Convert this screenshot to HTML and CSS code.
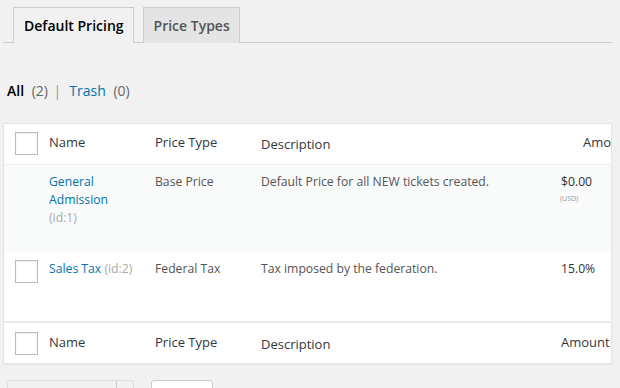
FILE: index.html
```html
<!DOCTYPE html>
<html lang="en">
<head>
    <meta charset="UTF-8">
    <title>Pricing</title>
    <link rel="stylesheet" href="styles.css">
</head>
<body>
    <div class="wrap">
        <nav class="tabs">
            <a href="#" class="tab tab-active">Default Pricing</a>
            <a href="#" class="tab">Price Types</a>
        </nav>

        <ul class="subsubsub">
            <li><a href="#" class="current">All</a> <span class="count">(2)</span> <span class="sep">|</span></li>
            <li><a href="#">Trash</a> <span class="count">(0)</span></li>
        </ul>

        <div class="list-box">
            <table class="list-table">
                <colgroup>
                    <col class="col-cb">
                    <col class="col-name">
                    <col class="col-type">
                    <col class="col-desc">
                    <col class="col-amount">
                </colgroup>
                <thead>
                    <tr>
                        <th class="cb"><span class="checkbox"></span></th>
                        <th>Name</th>
                        <th>Price Type</th>
                        <th class="th-desc">Description</th>
                        <th class="th-amount">Amount</th>
                    </tr>
                </thead>
                <tbody>
                    <tr class="alt row-tall">
                        <td class="cb"></td>
                        <td><a href="#">General Admission</a><br><span class="id">(id:1)</span></td>
                        <td>Base Price</td>
                        <td>Default Price for all NEW tickets created.</td>
                        <td class="amount">$0.00<span class="currency">(USD)</span></td>
                    </tr>
                    <tr class="row-short">
                        <td class="cb"><span class="checkbox"></span></td>
                        <td><a href="#">Sales Tax</a> <span class="id">(id:2)</span></td>
                        <td>Federal Tax</td>
                        <td>Tax imposed by the federation.</td>
                        <td class="amount">15.0%</td>
                    </tr>
                </tbody>
                <tfoot>
                    <tr>
                        <th class="cb"><span class="checkbox"></span></th>
                        <th>Name</th>
                        <th>Price Type</th>
                        <th class="th-desc">Description</th>
                        <th>Amount</th>
                    </tr>
                </tfoot>
            </table>
        </div>

        <div class="tablenav">
            <div class="bulk-select"><span class="bulk-arrow"></span></div>
            <div class="apply-btn"></div>
        </div>
    </div>
</body>
</html>
```

FILE: styles.css
```css
body {
    margin: 0;
    background: #f1f1f1;
    font-family: "Open Sans", "Liberation Sans", sans-serif;
    color: #444;
    overflow: hidden;
}

a {
    color: #0073aa;
    text-decoration: none;
}

.wrap {
    padding: 7px 8px 0 3px;
}

/* tabs */
.tabs {
    display: flex;
    gap: 9px;
    padding-left: 10px;
    border-bottom: 1px solid #ccc;
    height: 35px;
}

.tab {
    box-sizing: border-box;
    height: 36px;
    padding: 8px 9px 0 10px;
    border: 1px solid #ccc;
    border-bottom: 0;
    background: #e4e4e4;
    color: #555;
    font-size: 14px;
    font-weight: 600;
    line-height: 20px;
}

.tab-active {
    background: #f1f1f1;
    color: #000;
}

/* view filters */
.subsubsub {
    list-style: none;
    display: flex;
    margin: 39px 0 0 4px;
    padding: 0;
    font-size: 14px;
    line-height: 18px;
    color: #666;
}

.subsubsub li {
    margin-right: 8px;
}

.subsubsub .current {
    color: #000;
    font-weight: 600;
}

.subsubsub .count {
    margin-left: 4px;
}

.subsubsub .sep {
    margin-left: 2px;
    color: #999;
}

/* list table */
.list-box {
    margin-top: 23px;
    border: 1px solid #e5e5e5;
    background: #fff;
    box-shadow: 0 1px 1px rgba(0, 0, 0, .04);
    overflow: hidden;
}

.list-table {
    table-layout: fixed;
    width: 660px;
    border-collapse: collapse;
    border-spacing: 0;
    font-size: 12.2px;
    line-height: 18px;
    color: #555;
}

.col-cb { width: 45px; }
.col-name { width: 106px; }
.col-type { width: 106px; }
.col-desc { width: 300px; }
.col-amount { width: 103px; }

.list-table th,
.list-table td {
    padding: 0;
    text-align: left;
    vertical-align: top;
}

.list-table th {
    font-weight: 400;
    font-size: 13px;
    color: #32373c;
    vertical-align: middle;
    padding-bottom: 3px;
}

.list-table thead tr {
    height: 40px;
}

.list-table tfoot tr {
    height: 41px;
}

.list-table thead th {
    border-bottom: 1px solid #eee;
}

.list-table tfoot th {
    border-top: 2px solid #eaeaea;
}

.list-table .th-desc {
    padding: 1px 0 0;
}

.list-table .th-amount {
    padding-left: 22px;
}

.list-table th.cb {
    padding: 0 0 0 11px;
}

.list-table td.cb {
    padding-left: 11px;
}

.checkbox {
    display: block;
    box-sizing: border-box;
    width: 23px;
    height: 23px;
    border: 1px solid #bbb;
    background: #fff;
    box-shadow: inset 0 1px 2px rgba(0, 0, 0, .07);
}

.row-tall {
    height: 88px;
}

.row-tall td {
    padding-top: 8px;
}

.row-short {
    height: 70px;
}

.row-short td {
    padding-top: 8px;
}

.alt {
    background: #f9fafa;
}

.id {
    color: #aaa;
}

.amount {
    color: #333;
}

.currency {
    display: block;
    margin-left: -1px;
    font-size: 7px;
    line-height: 16px;
    color: #999;
}

/* bottom nav */
.tablenav {
    display: flex;
    gap: 17px;
    margin: 16px 0 0 4px;
}

.bulk-select {
    box-sizing: border-box;
    width: 127px;
    height: 30px;
    border: 1px solid #ddd;
    border-radius: 3px;
    background: #f1f1f1;
    position: relative;
}

.bulk-arrow {
    position: absolute;
    top: 0;
    bottom: 0;
    left: 108px;
    border-left: 1px solid #ccc;
}

.apply-btn {
    box-sizing: border-box;
    width: 62px;
    height: 30px;
    border: 1px solid #ccc;
    border-radius: 3px;
    background: #fff;
}
```
